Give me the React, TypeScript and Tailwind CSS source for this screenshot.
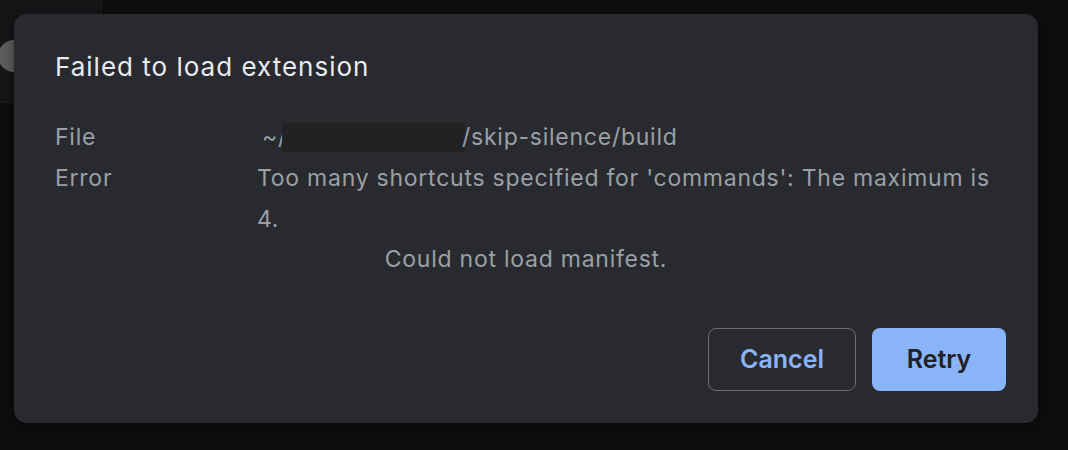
import React from "react";

const font = { fontFamily: "Inter, Roboto, 'Noto Sans', Arial, sans-serif" };

const App = () => (
	<div className="relative w-[1068px] h-[450px] overflow-hidden bg-[#0d0d0e]" style={font}>
		{/* page behind the modal */}
		<div className="relative w-[102px] h-[103px] bg-[#151517] border-r border-b border-[#1b1b1d]">
			<span className="absolute left-[-2px] top-[40px] w-[32px] h-[32px] rounded-full bg-[#5c5c5e]"></span>
		</div>

		<div className="absolute left-[14px] top-[14px] w-[1024px] h-[409px] rounded-[13px] bg-[#292a2f] shadow-[0_4px_12px_rgba(0,0,0,0.4)] flex flex-col pl-[41px] pr-[32px] pb-[32px]">
			<h1 className="mt-[37px] text-[26px] leading-[32px] tracking-[1px] text-[#e8eaed] font-normal">Failed to load extension</h1>

			<div className="mt-[34px] grid grid-cols-[202px_1fr] text-[23px] leading-[41px] tracking-[0.75px] text-[#9aa0a6] pr-[9px]">
				<span>File</span>
				<span className="flex items-center">
					<span className="ml-[5px]">~/</span>
					<span className="inline-block w-[183px] h-[29px] bg-[#222222] ml-[-5px] mr-[-3px]"></span>
					<span>/skip-silence/build</span>
				</span>
				<span>Error</span>
				<span className="max-w-[740px]">Too many shortcuts specified for 'commands': The maximum is 4.</span>
			</div>
			<p className="text-center text-[23px] leading-[36px] tracking-[0.75px] text-[#9aa0a6] pr-[9px] mt-[1px]">Could not load manifest.</p>

			<div className="mt-auto flex justify-end gap-[16px]">
				<button className="w-[148px] h-[63px] rounded-[8px] border-[1.5px] border-[#6b6c70] text-[#8ab4f8] text-[25px] font-semibold">
					Cancel
				</button>
				<button className="w-[134px] h-[63px] rounded-[8px] bg-[#8ab4f8] text-[#202124] text-[25px] font-semibold">
					Retry
				</button>
			</div>
		</div>
	</div>
);

export default App;
